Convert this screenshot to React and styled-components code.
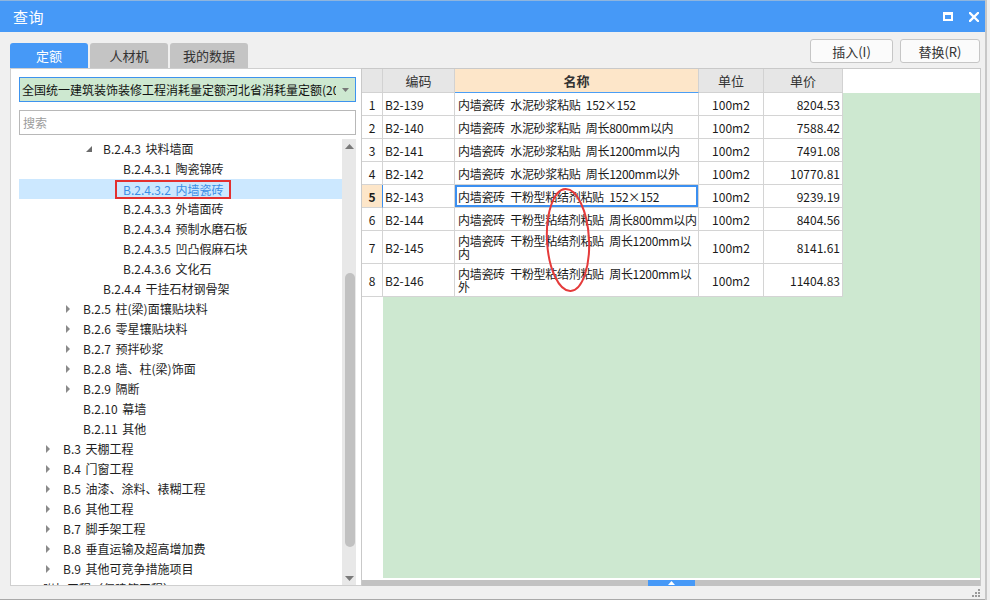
import React from 'react';
import styled, { createGlobalStyle } from 'styled-components';

const GlobalStyle = createGlobalStyle`
  html, body { margin: 0; padding: 0; background: #ececec; overflow: hidden; }
  body { font-family: "Noto Sans CJK SC", "Microsoft YaHei", sans-serif; color: #222; }
  * { box-sizing: border-box; }
`;

const FONT = `"Noto Sans CJK SC", "Microsoft YaHei", sans-serif`;
const BLUE = '#4699f7';
const GREEN = '#cde8d0';

const Page = styled.div`
  display: flex;
  width: 990px;
  height: 600px;
`;

const Window = styled.div`
  width: 985px;
  height: 600px;
  flex: none;
  display: flex;
  flex-direction: column;
  background: #f0f0f0;
  border-bottom: 1px solid #a9a9a9;
`;

const Edge = styled.div`
  flex: 1;
  background: #efefef;
  border-left: 2px solid #c7c7c7;
`;

const TitleBar = styled.div`
  height: 32px;
  flex: none;
  display: flex;
  align-items: center;
  padding: 0 6px 0 13px;
  background: ${BLUE};
  border-top: 1px solid #8fb5de;
  color: #fff;
`;

const Title = styled.span`
  flex: 1;
  font-size: 15px;
  letter-spacing: 0.5px;
`;

const WinButtons = styled.div`
  display: flex;
  align-items: center;
  gap: 16px;
`;

const Toolbar = styled.div`
  height: 36px;
  flex: none;
  display: flex;
  justify-content: space-between;
  padding: 0 5px 0 10px;
`;

const Tabs = styled.div`
  display: flex;
  gap: 2px;
  align-self: flex-end;
`;

const Tab = styled.div`
  width: 78px;
  height: 25px;
  display: flex;
  align-items: center;
  justify-content: center;
  font-size: 13px;
  border-radius: 3px 3px 0 0;
  background: ${p => (p.$active ? BLUE : '#c4c4c4')};
  color: ${p => (p.$active ? '#fff' : '#333')};
`;

const Actions = styled.div`
  display: flex;
  gap: 7px;
  padding-top: 7px;
`;

const Button = styled.button`
  width: ${p => p.$w}px;
  height: 24px;
  padding: 0;
  border: 1px solid #c6c6c6;
  border-radius: 3px;
  background: #fbfbfb;
  font: 13px ${FONT};
  color: #333;
`;

const Main = styled.div`
  height: 518px;
  flex: none;
  display: flex;
  padding-left: 10px;
`;

const LeftPanel = styled.div`
  width: 351px;
  display: flex;
  flex-direction: column;
  padding: 8px 5px 0 8px;
  background: #fff;
  border: 1px solid #cfcfcf;
  border-right: none;
`;

const Dropdown = styled.div`
  height: 25px;
  flex: none;
  display: flex;
  align-items: center;
  background: ${GREEN};
  border: 1px solid #3d93ee;
  font-size: 12px;
  color: #111;
`;

const DropText = styled.span`
  width: 316px;
  padding-left: 2px;
  overflow: hidden;
  white-space: nowrap;
`;

const DropArrow = styled.span`
  flex: 1;
  display: flex;
  justify-content: center;
`;

const Search = styled.input`
  height: 25px;
  flex: none;
  margin-top: 8px;
  padding: 0 3px;
  border: 1px solid #b8b8b8;
  outline: none;
  font: 12px ${FONT};
  &::placeholder { color: #9c9c9c; }
`;

const TreeWrap = styled.div`
  flex: 1;
  min-height: 0;
  margin-top: 4px;
  display: flex;
  overflow: hidden;
`;

const TreeList = styled.div`
  flex: 1;
  overflow: hidden;
`;

const TreeRow = styled.div`
  height: 20px;
  display: flex;
  align-items: center;
  padding-left: ${p => 24 + 20 * p.$level}px;
  background: ${p => (p.$selected ? '#cce8ff' : 'transparent')};
  color: ${p => (p.$selected ? '#3a8ee6' : '#1e1e1e')};
  font-size: 12px;
  word-spacing: 2px;
  white-space: nowrap;
`;

const Caret = styled.span`
  width: 20px;
  flex: none;
  display: flex;
  align-items: center;
  padding-left: 3px;
`;

const Label = styled.span`
  line-height: 20px;
`;

const MarkedLabel = styled.span`
  margin-left: -8px;
  padding: 0 5px 0 6px;
  height: 19px;
  line-height: 15px;
  border: 2px solid #e3302f;
`;

const VScroll = styled.div`
  width: 14px;
  flex: none;
  display: flex;
  flex-direction: column;
  align-items: center;
  background: #e8e8e8;
`;

const ScrollArrow = styled.div`
  height: 14px;
  flex: none;
  display: flex;
  align-items: center;
  justify-content: center;
`;

const Thumb = styled.div`
  width: 10px;
  height: 274px;
  margin-top: 120px;
  margin-left: 1px;
  border-radius: 5px;
  background: #c1c1c1;
`;

const Spacer = styled.div`
  flex: 1;
`;

const RightPanel = styled.div`
  position: relative;
  width: 620px;
  display: flex;
  flex-direction: column;
  background: #fff;
  border: 1px solid #c9c9c9;
  border-bottom: none;
`;

const HeaderRow = styled.div`
  height: 24px;
  flex: none;
  display: flex;
`;

const HeadCell = styled.div`
  width: ${p => p.$w}px;
  flex: none;
  display: flex;
  align-items: center;
  justify-content: center;
  font-size: 13px;
  color: #333;
  font-weight: ${p => (p.$active ? 700 : 400)};
  background: ${p => (p.$active ? '#fde6c9' : '#e6e6e6')};
  border-right: 1px solid #d2d2d2;
  border-bottom: 1px solid ${p => (p.$active ? '#4a9ef5' : '#d2d2d2')};
`;

const GridBody = styled.div`
  flex: 1;
  display: flex;
  flex-direction: column;
  margin-bottom: 2px;
  background: linear-gradient(to right, #fff 21px, ${GREEN} 21px);
`;

const DataRow = styled.div`
  height: ${p => p.$h}px;
  flex: none;
  display: flex;
`;

const Cell = styled.div`
  width: ${p => p.$w}px;
  flex: none;
  display: flex;
  align-items: center;
  justify-content: ${p => p.$align || 'flex-start'};
  padding: 0 ${p => p.$pad ?? 2}px;
  background: ${p => p.$bg || '#fff'};
  border-right: 1px solid ${p => p.$rightColor || '#d4d4d4'};
  border-bottom: 1px solid #d4d4d4;
  box-shadow: ${p => (p.$focus ? 'inset 0 0 0 2px #3b8ff0' : 'none')};
  font-size: 12px;
  line-height: 13px;
  font-weight: ${p => (p.$bold ? 700 : 400)};
  color: #1a1a1a;
  white-space: pre;
  overflow: hidden;
`;

const NameText = styled.span`
  letter-spacing: -0.3px;
  word-spacing: 3px;
`;

const HSplit = styled.div`
  height: 6px;
  flex: none;
  display: flex;
  justify-content: center;
  background: #c2c2c2;
`;

const SplitHandle = styled.div`
  width: 47px;
  display: flex;
  align-items: center;
  justify-content: center;
  background: ${BLUE};
`;

const Annotation = styled.svg`
  position: absolute;
  left: 181px;
  top: 118px;
  pointer-events: none;
`;

const StatusBar = styled.div`
  flex: 1;
  display: flex;
  justify-content: flex-end;
  align-items: center;
  padding-right: 5px;
`;

const cols = [21, 72, 244, 65, 79];

const rows = [
  { n: '1', code: 'B2-139', name: '内墙瓷砖 水泥砂浆粘贴 152×152', price: '8204.53', h: 23 },
  { n: '2', code: 'B2-140', name: '内墙瓷砖 水泥砂浆粘贴 周长800mm以内', price: '7588.42', h: 23 },
  { n: '3', code: 'B2-141', name: '内墙瓷砖 水泥砂浆粘贴 周长1200mm以内', price: '7491.08', h: 23 },
  { n: '4', code: 'B2-142', name: '内墙瓷砖 水泥砂浆粘贴 周长1200mm以外', price: '10770.81', h: 23 },
  { n: '5', code: 'B2-143', name: '内墙瓷砖 干粉型粘结剂粘贴 152×152', price: '9239.19', h: 23, cur: true },
  { n: '6', code: 'B2-144', name: '内墙瓷砖 干粉型粘结剂粘贴 周长800mm以内', price: '8404.56', h: 23 },
  { n: '7', code: 'B2-145', name: '内墙瓷砖 干粉型粘结剂粘贴 周长1200mm以\n内', price: '8141.61', h: 33 },
  { n: '8', code: 'B2-146', name: '内墙瓷砖 干粉型粘结剂粘贴 周长1200mm以\n外', price: '11404.83', h: 33 },
];

const tree = [
  { l: 2, t: 'B.2.4.3 块料墙面', c: 'open' },
  { l: 3, t: 'B.2.4.3.1 陶瓷锦砖' },
  { l: 3, t: 'B.2.4.3.2 内墙瓷砖', sel: true },
  { l: 3, t: 'B.2.4.3.3 外墙面砖' },
  { l: 3, t: 'B.2.4.3.4 预制水磨石板' },
  { l: 3, t: 'B.2.4.3.5 凹凸假麻石块' },
  { l: 3, t: 'B.2.4.3.6 文化石' },
  { l: 2, t: 'B.2.4.4 干挂石材钢骨架' },
  { l: 1, t: 'B.2.5 柱(梁)面镶贴块料', c: 'closed' },
  { l: 1, t: 'B.2.6 零星镶贴块料', c: 'closed' },
  { l: 1, t: 'B.2.7 预拌砂浆', c: 'closed' },
  { l: 1, t: 'B.2.8 墙、柱(梁)饰面', c: 'closed' },
  { l: 1, t: 'B.2.9 隔断', c: 'closed' },
  { l: 1, t: 'B.2.10 幕墙' },
  { l: 1, t: 'B.2.11 其他' },
  { l: 0, t: 'B.3 天棚工程', c: 'closed' },
  { l: 0, t: 'B.4 门窗工程', c: 'closed' },
  { l: 0, t: 'B.5 油漆、涂料、裱糊工程', c: 'closed' },
  { l: 0, t: 'B.6 其他工程', c: 'closed' },
  { l: 0, t: 'B.7 脚手架工程', c: 'closed' },
  { l: 0, t: 'B.8 垂直运输及超高增加费', c: 'closed' },
  { l: 0, t: 'B.9 其他可竞争措施项目', c: 'closed' },
  { l: -1, t: '附加工程（仅建筑工程）' },
];

const CaretIcon = ({ kind }) => {
  if (kind === 'open') {
    return (
      <svg width="6" height="6" viewBox="0 0 6 6">
        <polygon points="6,0 6,6 0,6" fill="#6b6b6b" />
      </svg>
    );
  }
  if (kind === 'closed') {
    return (
      <svg width="4" height="8" viewBox="0 0 4 8">
        <polygon points="0,0 4,4 0,8" fill="#8a8a8a" />
      </svg>
    );
  }
  return null;
};

export default function App() {
  return (
    <Page>
      <GlobalStyle />
      <Window>
        <TitleBar>
          <Title>查询</Title>
          <WinButtons>
            <svg width="10" height="9" viewBox="0 0 10 9">
              <rect x="1" y="1.5" width="8" height="6.5" fill="none" stroke="#fff" strokeWidth="2" />
              <rect x="0" y="0" width="10" height="3" fill="#fff" />
            </svg>
            <svg width="10" height="10" viewBox="0 0 10 10">
              <path d="M1 1 L9 9 M9 1 L1 9" stroke="#fff" strokeWidth="2.3" strokeLinecap="square" />
            </svg>
          </WinButtons>
        </TitleBar>

        <Toolbar>
          <Tabs>
            <Tab $active>定额</Tab>
            <Tab>人材机</Tab>
            <Tab>我的数据</Tab>
          </Tabs>
          <Actions>
            <Button $w={83}>插入(I)</Button>
            <Button $w={80}>替换(R)</Button>
          </Actions>
        </Toolbar>

        <Main>
          <LeftPanel>
            <Dropdown>
              <DropText>全国统一建筑装饰装修工程消耗量定额河北省消耗量定额(2012)</DropText>
              <DropArrow>
                <svg width="7" height="4" viewBox="0 0 7 4">
                  <polygon points="0,0 7,0 3.5,4" fill="#777" />
                </svg>
              </DropArrow>
            </Dropdown>
            <Search placeholder="搜索" />
            <TreeWrap>
              <TreeList>
                {tree.map((r, i) => (
                  <TreeRow key={i} $level={r.l} $selected={r.sel}>
                    <Caret>
                      <CaretIcon kind={r.c} />
                    </Caret>
                    {r.sel ? <MarkedLabel>{r.t}</MarkedLabel> : <Label>{r.t}</Label>}
                  </TreeRow>
                ))}
              </TreeList>
              <VScroll>
                <ScrollArrow>
                  <svg width="9" height="5" viewBox="0 0 9 5">
                    <polygon points="0,5 9,5 4.5,0" fill="#7a7a7a" />
                  </svg>
                </ScrollArrow>
                <Thumb />
                <Spacer />
                <ScrollArrow>
                  <svg width="9" height="5" viewBox="0 0 9 5">
                    <polygon points="0,0 9,0 4.5,5" fill="#7a7a7a" />
                  </svg>
                </ScrollArrow>
              </VScroll>
            </TreeWrap>
          </LeftPanel>

          <RightPanel>
            <HeaderRow>
              <HeadCell $w={cols[0]} />
              <HeadCell $w={cols[1]}>编码</HeadCell>
              <HeadCell $w={cols[2]} $active>名称</HeadCell>
              <HeadCell $w={cols[3]}>单位</HeadCell>
              <HeadCell $w={cols[4]}>单价</HeadCell>
            </HeaderRow>
            <GridBody>
              {rows.map(r => (
                <DataRow key={r.n} $h={r.h}>
                  <Cell
                    $w={cols[0]}
                    $align="center"
                    $pad={0}
                    $bg={r.cur ? '#fde6c9' : '#fff'}
                    $bold={r.cur}
                    $rightColor={r.cur ? '#3b8ff0' : '#d4d4d4'}
                  >
                    {r.n}
                  </Cell>
                  <Cell $w={cols[1]}>{r.code}</Cell>
                  <Cell $w={cols[2]} $pad={3} $focus={r.cur}>
                    <NameText>{r.name}</NameText>
                  </Cell>
                  <Cell $w={cols[3]} $align="center">100m2</Cell>
                  <Cell $w={cols[4]} $align="flex-end">{r.price}</Cell>
                </DataRow>
              ))}
            </GridBody>
            <HSplit>
              <SplitHandle>
                <svg width="7" height="4" viewBox="0 0 7 4">
                  <polygon points="0,4 7,4 3.5,0" fill="#fff" />
                </svg>
              </SplitHandle>
            </HSplit>
            <Annotation width="50" height="106" viewBox="0 0 50 106">
              <ellipse cx="25" cy="53" rx="21" ry="51" fill="none" stroke="#e53b3b" strokeWidth="2" transform="rotate(-3 25 53)" />
            </Annotation>
          </RightPanel>
        </Main>

        <StatusBar>
          <svg width="8" height="8" viewBox="0 0 8 8">
            <rect x="6" y="0" width="2" height="2" fill="#9a9a9a" />
            <rect x="3" y="3" width="2" height="2" fill="#9a9a9a" />
            <rect x="6" y="3" width="2" height="2" fill="#9a9a9a" />
            <rect x="0" y="6" width="2" height="2" fill="#9a9a9a" />
            <rect x="3" y="6" width="2" height="2" fill="#9a9a9a" />
            <rect x="6" y="6" width="2" height="2" fill="#9a9a9a" />
          </svg>
        </StatusBar>
      </Window>
      <Edge />
    </Page>
  );
}
